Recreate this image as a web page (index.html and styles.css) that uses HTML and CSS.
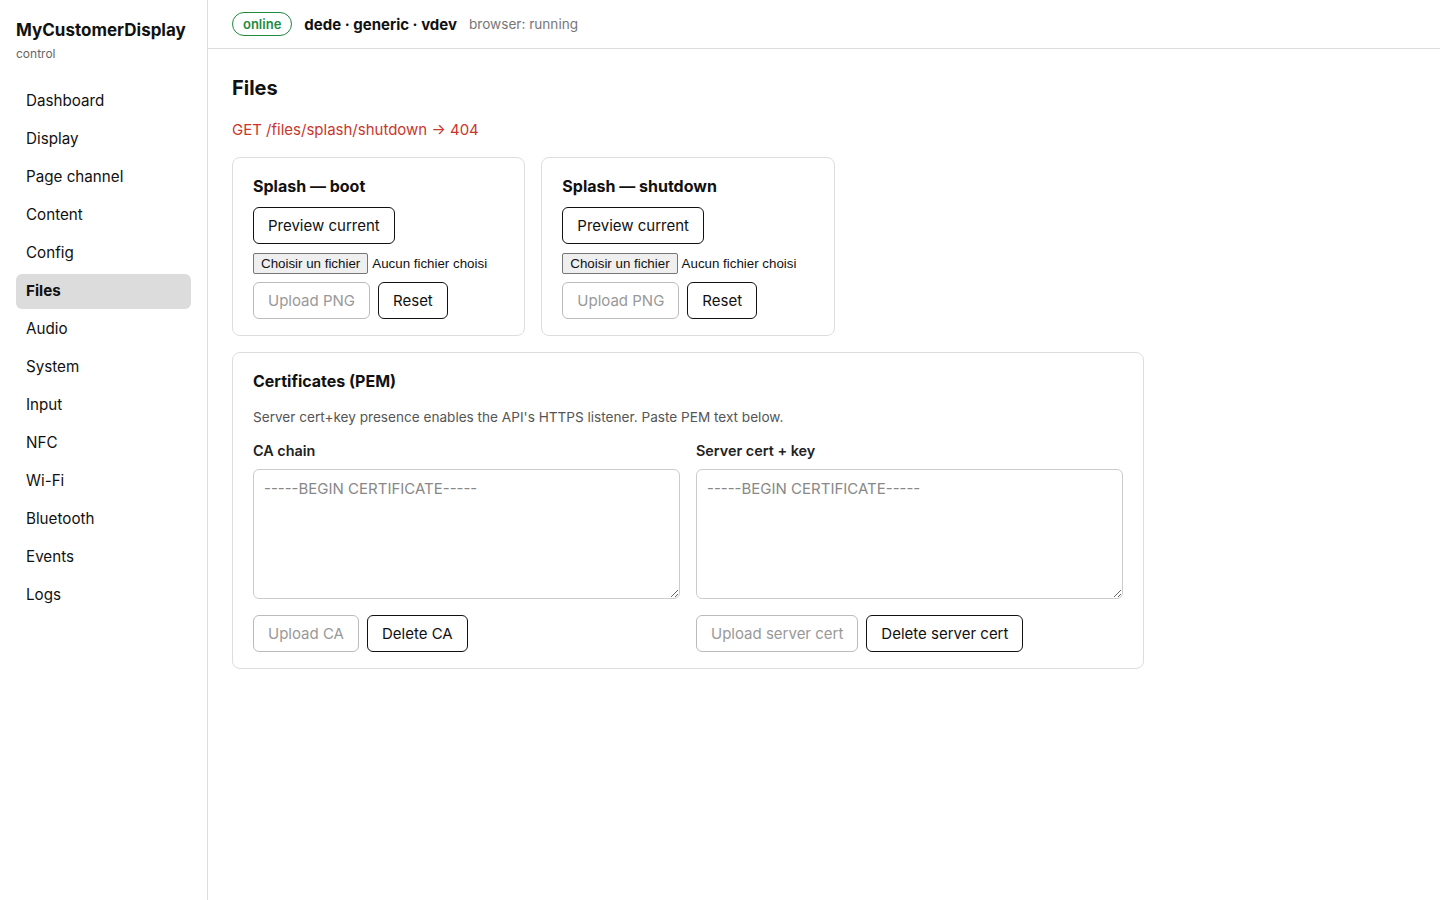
FILE: index.html
```html
<!DOCTYPE html>
<html lang="en">
<head>
  <meta charset="UTF-8">
  <meta name="viewport" content="width=device-width,initial-scale=1">
  <title>MyCustomerDisplay — Files</title>
  <link rel="stylesheet" href="styles.css">
</head>
<body>

  <aside class="sidebar">
    <div class="brand">MyCustomerDisplay</div>
    <div class="brand-sub">control</div>
    <nav class="nav">
      <a href="#">Dashboard</a>
      <a href="#">Display</a>
      <a href="#">Page channel</a>
      <a href="#">Content</a>
      <a href="#">Config</a>
      <a href="#" class="active">Files</a>
      <a href="#">Audio</a>
      <a href="#">System</a>
      <a href="#">Input</a>
      <a href="#">NFC</a>
      <a href="#">Wi-Fi</a>
      <a href="#">Bluetooth</a>
      <a href="#">Events</a>
      <a href="#">Logs</a>
    </nav>
  </aside>

  <div class="main">
    <header class="topbar">
      <span class="badge">online</span>
      <span class="device">dede · generic · vdev</span>
      <span class="status">browser: running</span>
    </header>

    <section class="content">
      <h2>Files</h2>
      <div class="error">GET /files/splash/shutdown → 404</div>

      <div class="cards">
        <div class="card">
          <h3>Splash — boot</h3>
          <div><button class="btn">Preview current</button></div>
          <div class="file-row">
            <label class="file-btn">Choisir un fichier<input type="file" accept="image/png"></label>
            <span class="file-name">Aucun fichier choisi</span>
          </div>
          <div class="btn-row">
            <button class="btn" disabled>Upload PNG</button>
            <button class="btn">Reset</button>
          </div>
        </div>

        <div class="card">
          <h3>Splash — shutdown</h3>
          <div><button class="btn">Preview current</button></div>
          <div class="file-row">
            <label class="file-btn">Choisir un fichier<input type="file" accept="image/png"></label>
            <span class="file-name">Aucun fichier choisi</span>
          </div>
          <div class="btn-row">
            <button class="btn" disabled>Upload PNG</button>
            <button class="btn">Reset</button>
          </div>
        </div>

        <div class="card wide">
          <h3>Certificates (PEM)</h3>
          <p class="hint">Server cert+key presence enables the API's HTTPS listener. Paste PEM text below.</p>
          <div class="pem-grid">
            <div class="pem-col">
              <label class="field-label">CA chain</label>
              <textarea placeholder="-----BEGIN CERTIFICATE-----"></textarea>
              <div class="btn-row">
                <button class="btn" disabled>Upload CA</button>
                <button class="btn">Delete CA</button>
              </div>
            </div>
            <div class="pem-col">
              <label class="field-label">Server cert + key</label>
              <textarea placeholder="-----BEGIN CERTIFICATE-----"></textarea>
              <div class="btn-row">
                <button class="btn" disabled>Upload server cert</button>
                <button class="btn">Delete server cert</button>
              </div>
            </div>
          </div>
        </div>
      </div>
    </section>
  </div>

</body>
</html>
```

FILE: styles.css
```css
* {
  box-sizing: border-box;
}
body {
  margin: 0;
  display: flex;
  min-height: 100vh;
  font-family: Inter, "Noto Sans", sans-serif;
  color: #111;
  background: #fff;
}
.sidebar {
  width: 208px;
  flex-shrink: 0;
  border-right: 1px solid #ddd;
  padding: 19px 16px;
}
.brand {
  font-size: 17px;
  font-weight: 700;
  line-height: 22px;
}
.brand-sub {
  font-size: 12px;
  line-height: 16px;
  color: #666;
  margin-top: 5px;
}
.nav {
  margin-top: 22px;
  display: flex;
  flex-direction: column;
  gap: 3px;
}
.nav a {
  display: block;
  padding: 8px 10px 9px;
  line-height: 18px;
  font-size: 15.2px;
  color: #111;
  text-decoration: none;
  border-radius: 6px;
}
.nav a.active {
  background: #dcdcdc;
  font-weight: 700;
}
.main {
  flex: 1;
  min-width: 0;
}
.topbar {
  height: 49px;
  border-bottom: 1px solid #ddd;
  padding: 0 24px;
  display: flex;
  align-items: center;
  gap: 12px;
}
.badge {
  display: inline-block;
  font-size: 13px;
  font-weight: 600;
  color: #1e8a3e;
  border: 1px solid #1e8a3e;
  border-radius: 12px;
  padding: 0 10px;
  line-height: 22px;
}
.device {
  font-size: 15px;
  font-weight: 700;
}
.status {
  font-size: 13.6px;
  color: #777;
}
.content {
  padding: 25px 24px 24px;
  max-width: 960px;
}
h2 {
  margin: 0;
  font-size: 20px;
  line-height: 28px;
  font-weight: 700;
}
.error {
  margin-top: 18px;
  font-size: 15px;
  line-height: 20px;
  color: #c9372c;
}
.cards {
  margin-top: 17px;
  display: grid;
  grid-template-columns: repeat(3, 1fr);
  column-gap: 16px;
  row-gap: 16px;
}
.card {
  border: 1px solid #ddd;
  border-radius: 8px;
  padding: 16px 20px;
  display: flex;
  flex-direction: column;
  gap: 9px;
}
.card.wide {
  grid-column: 1 / -1;
  gap: 0;
}
h3 {
  margin: 0;
  font-size: 16px;
  line-height: 24px;
  font-weight: 700;
}
.btn {
  font-family: Inter, "Noto Sans", sans-serif;
  font-size: 15px;
  line-height: 19px;
  padding: 8px 14px;
  background: #fff;
  color: #111;
  border: 1px solid #111;
  border-radius: 6px;
  cursor: pointer;
}
.btn:disabled {
  color: #999;
  border-color: #bbb;
  cursor: default;
}
.btn-row {
  display: flex;
  gap: 8px;
}
.file-row {
  display: flex;
  align-items: center;
  gap: 4px;
  font-family: "Liberation Sans", Arial, sans-serif;
  font-size: 13.333px;
  height: 20px;
}
.file-btn {
  background: #efefef;
  border: 1px solid #767676;
  border-radius: 2px;
  padding: 1px 7px;
  line-height: 17px;
  color: #111;
}
.file-btn input {
  display: none;
}
.hint {
  margin: 14px 0 0;
  font-size: 13.6px;
  line-height: 20px;
  color: #555;
}
.pem-grid {
  margin-top: 14px;
  display: grid;
  grid-template-columns: 1fr 1fr;
  gap: 16px;
}
.pem-col {
  display: flex;
  flex-direction: column;
}
.field-label {
  font-size: 14.4px;
  font-weight: 600;
  line-height: 20px;
  color: #222;
}
textarea {
  margin-top: 8px;
  height: 130px;
  resize: vertical;
  border: 1px solid #ccc;
  border-radius: 6px;
  padding: 9px 10px;
  font-family: Inter, "Noto Sans", sans-serif;
  font-size: 15px;
  line-height: 20px;
}
textarea::placeholder {
  color: #888;
}
.pem-col .btn-row {
  margin-top: 16px;
}
```
